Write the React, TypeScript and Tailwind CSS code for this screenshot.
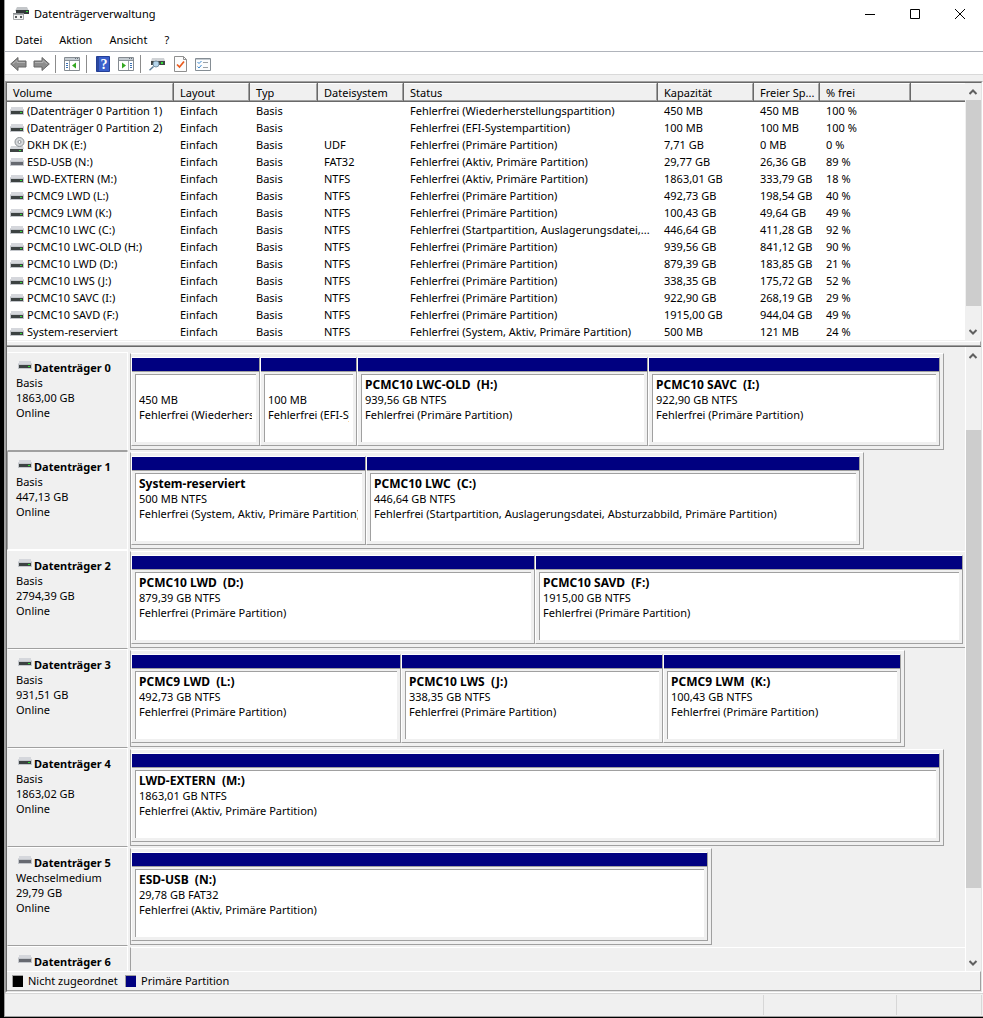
import { ReactNode } from "react"

type DriveKind = "disk" | "removable" | "optical"

interface Volume {
    name: string
    fs: string
    status: string
    capacity: string
    free: string
    percent: string
    kind?: DriveKind
}

interface Partition {
    name?: string
    size: string
    status: string
    weight: number
}

interface Disk {
    id: number
    type?: string
    size?: string
    span: number
    kind?: DriveKind
    selected?: boolean
    partitions: Partition[]
}

const volumes: Volume[] = [
    { name: "(Datenträger 0 Partition 1)", fs: "", status: "Fehlerfrei (Wiederherstellungspartition)", capacity: "450 MB", free: "450 MB", percent: "100 %" },
    { name: "(Datenträger 0 Partition 2)", fs: "", status: "Fehlerfrei (EFI-Systempartition)", capacity: "100 MB", free: "100 MB", percent: "100 %" },
    { name: "DKH DK (E:)", fs: "UDF", status: "Fehlerfrei (Primäre Partition)", capacity: "7,71 GB", free: "0 MB", percent: "0 %", kind: "optical" },
    { name: "ESD-USB (N:)", fs: "FAT32", status: "Fehlerfrei (Aktiv, Primäre Partition)", capacity: "29,77 GB", free: "26,36 GB", percent: "89 %", kind: "removable" },
    { name: "LWD-EXTERN (M:)", fs: "NTFS", status: "Fehlerfrei (Aktiv, Primäre Partition)", capacity: "1863,01 GB", free: "333,79 GB", percent: "18 %" },
    { name: "PCMC9 LWD (L:)", fs: "NTFS", status: "Fehlerfrei (Primäre Partition)", capacity: "492,73 GB", free: "198,54 GB", percent: "40 %" },
    { name: "PCMC9 LWM (K:)", fs: "NTFS", status: "Fehlerfrei (Primäre Partition)", capacity: "100,43 GB", free: "49,64 GB", percent: "49 %" },
    { name: "PCMC10 LWC (C:)", fs: "NTFS", status: "Fehlerfrei (Startpartition, Auslagerungsdatei,...", capacity: "446,64 GB", free: "411,28 GB", percent: "92 %" },
    { name: "PCMC10 LWC-OLD (H:)", fs: "NTFS", status: "Fehlerfrei (Primäre Partition)", capacity: "939,56 GB", free: "841,12 GB", percent: "90 %" },
    { name: "PCMC10 LWD (D:)", fs: "NTFS", status: "Fehlerfrei (Primäre Partition)", capacity: "879,39 GB", free: "183,85 GB", percent: "21 %" },
    { name: "PCMC10 LWS (J:)", fs: "NTFS", status: "Fehlerfrei (Primäre Partition)", capacity: "338,35 GB", free: "175,72 GB", percent: "52 %" },
    { name: "PCMC10 SAVC (I:)", fs: "NTFS", status: "Fehlerfrei (Primäre Partition)", capacity: "922,90 GB", free: "268,19 GB", percent: "29 %" },
    { name: "PCMC10 SAVD (F:)", fs: "NTFS", status: "Fehlerfrei (Primäre Partition)", capacity: "1915,00 GB", free: "944,04 GB", percent: "49 %" },
    { name: "System-reserviert", fs: "NTFS", status: "Fehlerfrei (System, Aktiv, Primäre Partition)", capacity: "500 MB", free: "121 MB", percent: "24 %" },
]

const primary = "Fehlerfrei (Primäre Partition)"

const disks: Disk[] = [
    {
        id: 0, type: "Basis", size: "1863,00 GB", span: 814,
        partitions: [
            { size: "450 MB", status: "Fehlerfrei (Wiederherstellungspartition)", weight: 129 },
            { size: "100 MB", status: "Fehlerfrei (EFI-Systempartition)", weight: 97 },
            { name: "PCMC10 LWC-OLD  (H:)", size: "939,56 GB NTFS", status: primary, weight: 291 },
            { name: "PCMC10 SAVC  (I:)", size: "922,90 GB NTFS", status: primary, weight: 292 },
        ],
    },
    {
        id: 1, type: "Basis", size: "447,13 GB", span: 734, selected: true,
        partitions: [
            { name: "System-reserviert", size: "500 MB NTFS", status: "Fehlerfrei (System, Aktiv, Primäre Partition)", weight: 235 },
            { name: "PCMC10 LWC  (C:)", size: "446,64 GB NTFS", status: "Fehlerfrei (Startpartition, Auslagerungsdatei, Absturzabbild, Primäre Partition)", weight: 494 },
        ],
    },
    {
        id: 2, type: "Basis", size: "2794,39 GB", span: 837,
        partitions: [
            { name: "PCMC10 LWD  (D:)", size: "879,39 GB NTFS", status: primary, weight: 404 },
            { name: "PCMC10 SAVD  (F:)", size: "1915,00 GB NTFS", status: primary, weight: 428 },
        ],
    },
    {
        id: 3, type: "Basis", size: "931,51 GB", span: 775,
        partitions: [
            { name: "PCMC9 LWD  (L:)", size: "492,73 GB NTFS", status: primary, weight: 270 },
            { name: "PCMC10 LWS  (J:)", size: "338,35 GB NTFS", status: primary, weight: 262 },
            { name: "PCMC9 LWM  (K:)", size: "100,43 GB NTFS", status: primary, weight: 238 },
        ],
    },
    {
        id: 4, type: "Basis", size: "1863,02 GB", span: 814,
        partitions: [{ name: "LWD-EXTERN  (M:)", size: "1863,01 GB NTFS", status: "Fehlerfrei (Aktiv, Primäre Partition)", weight: 809 }],
    },
    {
        id: 5, type: "Wechselmedium", size: "29,79 GB", span: 582, kind: "removable",
        partitions: [{ name: "ESD-USB  (N:)", size: "29,78 GB FAT32", status: "Fehlerfrei (Aktiv, Primäre Partition)", weight: 577 }],
    },
    { id: 6, span: 900, kind: "removable", partitions: [] },
]

// width of the disk map that the spans above refer to
const MAP_SPAN = 835

const columns = [
    { label: "Volume", width: "w-[167px]" },
    { label: "Layout", width: "w-[76px]" },
    { label: "Typ", width: "w-[68px]" },
    { label: "Dateisystem", width: "w-[86px]" },
    { label: "Status", width: "w-[254px]" },
    { label: "Kapazität", width: "w-24" },
    { label: "Freier Sp...", width: "w-[66px]" },
    { label: "% frei", width: "w-[91px]" },
]

function DriveIcon({ kind = "disk" }: { kind?: DriveKind }) {
    if (kind === "optical") {
        return (
            <svg width="15" height="16" viewBox="0 0 15 16" className="-mr-px shrink-0">
                <path d="M1 9h12l1 3H0z" fill="#d3d6da" />
                <path d="M0 12h13v3H0z" fill="#3f4444" />
                <circle cx="9.500" cy="5" r="4.500" fill="#d6d9dc" stroke="#8d9296" />
                <circle cx="9.500" cy="5" r="1.500" fill="#fff" stroke="#8d9296" />
                <path d="M9 13h2v1H9z" fill="#35e03a" />
            </svg>
        )
    }
    return (
        <svg width="14" height="8" viewBox="0 0 14 8" className="shrink-0" shapeRendering="crispEdges">
            <path d="M1 0h12v2h1v2H0V2h1z" fill="#d5d7dc" />
            <path d="M0 3h14v5H0z" fill="#c3c6cb" />
            <path d="M1 4h12v3H1z" fill={kind === "removable" ? "#666970" : "#3c4242"} />
            {kind === "disk" && <path d="M10 5h2v1h-2z" fill="#2fe035" />}
        </svg>
    )
}

function AppIcon() {
    return (
        <svg width="16" height="16" viewBox="0 0 16 16">
            <path d="M4 1h10l2 4H2z" fill="#c3c6c9" />
            <path d="M3 4h13v4H3z" fill="#34393a" />
            <path d="M13 5h2v1h-2z" fill="#35e03a" />
            <path d="M0 7h11v2H0z" fill="#8b8f92" />
            <path d="M.5 8.500h10v5H.5z" fill="#f4f4f4" stroke="#a6a9ab" />
            <path d="M2 10h2v2H2zM7 10h2v2H7z" fill="#55595b" />
        </svg>
    )
}

function ArrowIcon({ back }: { back?: boolean }) {
    return (
        <svg width="17" height="16" viewBox="0 0 17 16">
            <path
                d={back ? "M.7 8 8 1.500V5h8v6H8v3.500z" : "M16.300 8 9 1.500V5H1v6h8v3.500z"}
                fill="#8d8d8d"
                stroke="#676767"
            />
            <path d={back ? "M3 8l4-3.500V6.500h8" : "M2 6.500h8V4.500L14 8"} fill="none" stroke="#b2b2b2" />
        </svg>
    )
}

function PaneIcon({ flipped }: { flipped?: boolean }) {
    return (
        <svg width="16" height="14" viewBox="0 0 16 14">
            <path d="M.5.5h15v13H.5z" fill="#fff" stroke="#858b91" />
            <path d="M1 1h14v2H1z" fill="#c4cbd1" />
            <path d="M1 3h14v1H1z" fill="#8a9299" />
            <path d="M11 1h1v1h-1zM13 1h1v1h-1z" fill="#64707a" />
            <path d={flipped ? "M10 4h1v9h-1z" : "M5 4h1v9H5z"} fill="#9aa1a7" />
            <path d={flipped ? "M12 6.500h2M12 8.500h2M12 10.500h2" : "M2 6.500h2M2 8.500h2M2 10.500h2"} stroke="#3c72b4" />
            <path d={flipped ? "M4 5.500v6L8 8.500z" : "M12 5.500v6L8 8.500z"} fill="#35a822" />
        </svg>
    )
}

function HelpIcon() {
    return (
        <svg width="14" height="16" viewBox="0 0 14 16">
            <path d="M.5.5h13v15H.5z" fill="#3a5fcb" stroke="#243f96" />
            <path d="M1 1h2v14H1z" fill="#2a489f" />
            <text x="8" y="13" textAnchor="middle" fontSize="14" fontFamily="Liberation Serif, serif" fontWeight="bold" fill="#fff">?</text>
        </svg>
    )
}

function RescanIcon() {
    return (
        <svg width="16" height="13" viewBox="0 0 16 13">
            <path d="M3 0h12l1 3H2z" fill="#d0d3d6" />
            <path d="M2 3h14v4H2z" fill="#3f4545" />
            <path d="M12 4h2v2h-2z" fill="#35e03a" />
            <circle cx="7" cy="6" r="3" fill="#b6d6ec" stroke="#7893a5" />
            <path d="M4.500 8.500.5 12.300" stroke="#5d7f9a" strokeWidth="1.500" />
        </svg>
    )
}

function CheckPageIcon() {
    return (
        <svg width="13" height="16" viewBox="0 0 13 16">
            <path d="M.5.500h9l3 3v12H.5z" fill="#fcfcfc" stroke="#8f8f8f" />
            <path d="M9.500.5v3h3" fill="none" stroke="#8f8f8f" />
            <path d="M3 8.500 5.500 11 10 5.500" fill="none" stroke="#ea5a1c" strokeWidth="1.700" />
        </svg>
    )
}

function ListIcon() {
    return (
        <svg width="16" height="13" viewBox="0 0 16 13">
            <path d="M.5.500h15v12H.5z" fill="#fbfcfd" stroke="#858d94" />
            <path d="M1 1h14v1H1z" fill="#c4cbd1" />
            <path d="M2.500 4 4 5.500 6.500 3M2.500 8.500 4 10l2.500-3" fill="none" stroke="#3e8ad0" />
            <path d="M8 4.500h5M8 9.500h5" stroke="#9ba1a6" />
        </svg>
    )
}

function ToolButton({ label, className, children }: { label: string; className: string; children: ReactNode }) {
    return (
        <button type="button" aria-label={label} className={`flex h-4 items-center justify-center ${className}`}>
            {children}
        </button>
    )
}

function TitleBar() {
    return (
        <header className="flex h-7 shrink-0 items-center pl-2">
            <AppIcon />
            <h1 className="ml-[5px] flex-1">Datenträgerverwaltung</h1>
            <button type="button" aria-label="Minimieren" className="flex h-[26px] w-[45px] items-center justify-center">
                <svg width="11" height="11" viewBox="0 0 11 11"><path d="M0 5h10v1H0z" /></svg>
            </button>
            <button type="button" aria-label="Maximieren" className="flex h-[26px] w-[45px] items-center justify-center">
                <svg width="11" height="11" viewBox="0 0 11 11"><path d="M.5.500h9v9h-9z" fill="none" stroke="#000" /></svg>
            </button>
            <button type="button" aria-label="Schließen" className="flex h-[26px] w-[45px] items-center justify-center">
                <svg width="11" height="11" viewBox="0 0 11 11"><path d="M0 0l10 10M10 0 0 10" stroke="#000" /></svg>
            </button>
        </header>
    )
}

function Toolbar() {
    return (
        <div className="flex h-[23px] shrink-0 items-center border-b border-[#d9d9d9] pt-0.5 pl-[5px]">
            <ToolButton label="Zurück" className="w-[17px]"><ArrowIcon back /></ToolButton>
            <ToolButton label="Vorwärts" className="ml-1.5 w-[17px]"><ArrowIcon /></ToolButton>
            <div className="ml-[5px] h-[18px] w-px bg-[#8c8c8c]" />
            <ToolButton label="Konsolenstruktur" className="ml-2 w-4"><PaneIcon /></ToolButton>
            <div className="ml-1.5 h-[18px] w-px bg-[#8c8c8c]" />
            <ToolButton label="Hilfe" className="ml-[9px] w-3.5"><HelpIcon /></ToolButton>
            <ToolButton label="Aktionsbereich" className="ml-2 w-4"><PaneIcon flipped /></ToolButton>
            <div className="ml-1.5 h-[18px] w-px bg-[#8c8c8c]" />
            <ToolButton label="Datenträger neu einlesen" className="ml-2 w-4"><RescanIcon /></ToolButton>
            <ToolButton label="Eigenschaften" className="ml-2 w-3.5"><CheckPageIcon /></ToolButton>
            <ToolButton label="Ansicht" className="ml-2 w-4"><ListIcon /></ToolButton>
        </div>
    )
}

function ScrollButton({ down }: { down?: boolean }) {
    return (
        <button type="button" aria-label={down ? "Nach unten" : "Nach oben"} className="flex h-[17px] w-full shrink-0 items-center justify-center">
            <svg width="9" height="6" viewBox="0 0 9 6">
                <path d={down ? "M.5 1 4 4.500 7.500 1" : "M.5 5 4 1.500 7.500 5"} fill="none" stroke="#606060" strokeWidth="2" />
            </svg>
        </button>
    )
}

function VolumeList() {
    return (
        <section className="flex shrink-0 bg-white">
            <table className="min-w-0 flex-1 table-fixed border-collapse">
                <thead>
                    <tr className="h-[19px]">
                        {columns.map((col) => (
                            <th key={col.label} scope="col" className={`${col.width} p-0 text-left font-normal`}>
                                <div className="h-[19px] border-r border-b border-[#696969]">
                                    <div className="h-[18px] truncate border-t border-r border-b border-t-white border-r-[#a0a0a0] border-b-[#a0a0a0] bg-[#f0f0f0] pt-px pl-1.5 leading-4">
                                        {col.label}
                                    </div>
                                </div>
                            </th>
                        ))}
                        <td className="p-0">
                            <div className="h-[19px] border-b border-[#696969]">
                                <div className="h-[18px] border-t border-b border-t-white border-b-[#a0a0a0] bg-[#f0f0f0]" />
                            </div>
                        </td>
                    </tr>
                </thead>
                <tbody>
                    {volumes.map((v) => (
                        <tr key={v.name} className="h-[17px] leading-[17px] whitespace-nowrap">
                            <td className="p-0">
                                <div className="flex h-[17px] items-center gap-[3px] pl-[3px]">
                                    <DriveIcon kind={v.kind} />
                                    {v.name}
                                </div>
                            </td>
                            <td className="py-0 pl-1.5">Einfach</td>
                            <td className="py-0 pl-1.5">Basis</td>
                            <td className="py-0 pl-1.5">{v.fs}</td>
                            <td className="py-0 pl-1.5">{v.status}</td>
                            <td className="py-0 pl-1.5">{v.capacity}</td>
                            <td className="py-0 pl-1.5">{v.free}</td>
                            <td className="py-0 pl-1.5">{v.percent}</td>
                            <td className="p-0" />
                        </tr>
                    ))}
                </tbody>
            </table>
            <div className="flex w-4 shrink-0 flex-col bg-[#f0f0f0] pl-px">
                <ScrollButton />
                <div className="flex-1 bg-[#cdcdcd]" />
                <div className="h-[17px]" />
                <ScrollButton down />
            </div>
        </section>
    )
}

function PartitionBox({ partition, total }: { partition: Partition; total: number }) {
    return (
        <div
            className="flex min-w-0 flex-col border-t border-r border-b border-l border-t-white border-r-[#a0a0a0] border-b-[#a0a0a0] border-l-white"
            style={{ width: `${(partition.weight / total) * 100}%` }}
        >
            <div className="h-3.5 border-b border-[#a0a0a0] bg-[#000080]" />
            <div className="mr-[3px] mb-[3px] ml-[3px] mt-0.5 h-17 overflow-hidden border-t border-l border-[#a0a0a0] bg-white pt-0.5 pr-1 pl-[3px] leading-[15px] whitespace-pre">
                <p className="h-[15px] overflow-hidden text-[12px] font-bold">{partition.name}</p>
                <p className="overflow-hidden">{partition.size}</p>
                <p className="overflow-hidden">{partition.status}</p>
            </div>
        </div>
    )
}

function DiskRow({ disk }: { disk: Disk }) {
    const total = disk.partitions.reduce((sum, p) => sum + p.weight, 0)
    const edge = disk.selected
        ? "border-t-[#a0a0a0] border-l-[#a0a0a0] border-r-white border-b-white"
        : "border-t-white border-l-[#f0f0f0] border-r-white border-b-[#a0a0a0]"
    return (
        <li className="flex h-[99px] shrink-0">
            <div className={`mr-0.5 w-[121px] shrink-0 border pt-[7px] pl-2 leading-[15px] ${edge}`}>
                <div className="flex pl-0.5">
                    <div className="pt-px"><DriveIcon kind={disk.kind} /></div>
                    <h2 className="ml-0.5 font-bold whitespace-nowrap">Datenträger {disk.id}</h2>
                </div>
                {disk.type && (
                    <>
                        <p>{disk.type}</p>
                        <p>{disk.size}</p>
                        <p>Online</p>
                    </>
                )}
            </div>
            <div className="min-w-0 flex-1 overflow-hidden">
                <div
                    className="my-px flex h-[97px] border border-t-white border-r-[#a0a0a0] border-b-[#a0a0a0] border-l-[#a0a0a0] py-[3px] pr-[3px]"
                    style={{ width: `${(disk.span / MAP_SPAN) * 100}%` }}
                >
                    {disk.partitions.map((p) => (
                        <PartitionBox key={p.status + p.size} partition={p} total={total} />
                    ))}
                </div>
            </div>
        </li>
    )
}

function DiskMap() {
    return (
        <section className="flex min-h-0 flex-1">
            <ul className="flex min-w-0 flex-1 flex-col overflow-hidden pt-[5px]">
                {disks.map((d) => (
                    <DiskRow key={d.id} disk={d} />
                ))}
            </ul>
            <div className="flex w-4 shrink-0 flex-col border-l border-white">
                <ScrollButton />
                <div className="flex-[66]" />
                <div className="flex-[459] bg-[#cdcdcd]" />
                <div className="flex-[66]" />
                <ScrollButton down />
            </div>
        </section>
    )
}

function Legend() {
    return (
        <div className="flex h-5 shrink-0 items-center border-t border-r border-b border-t-white border-r-[#a0a0a0] border-b-[#a0a0a0] pl-[5px]">
            <span className="h-3 w-[11px] border-t border-l border-[#a0a0a0] bg-black" />
            <span className="ml-[5px] w-[92px]">Nicht zugeordnet</span>
            <span className="ml-[5px] h-3 w-[11px] border-t border-l border-[#a0a0a0] bg-[#000080]" />
            <span className="ml-[5px]">Primäre Partition</span>
        </div>
    )
}

export default function App() {
    return (
        <div className="flex h-screen bg-black pl-1 font-['Noto_Sans',sans-serif] text-[11px] text-black">
            <div className="mb-px flex min-w-0 flex-1 flex-col border-b border-l border-[#a0a0a0] bg-white">
                <TitleBar />
                <nav className="flex h-6 shrink-0 items-center gap-[17px] border-b border-[#b0b4bb] pt-0.5 pl-2.5">
                    <button type="button">Datei</button>
                    <button type="button">Aktion</button>
                    <button type="button">Ansicht</button>
                    <button type="button">?</button>
                </nav>
                <Toolbar />
                <div className="flex min-h-0 flex-1 flex-col bg-[#f0f0f0] pt-1.5">
                    <main className="flex min-h-0 flex-1 flex-col border border-t-[#a0a0a0] border-r-white border-b-white border-l-[#a0a0a0]">
                        <div className="flex min-h-0 flex-1 flex-col border border-t-[#696969] border-r-[#e3e3e3] border-b-[#e3e3e3] border-l-[#696969]">
                            <VolumeList />
                            <div className="flex h-[7px] shrink-0 flex-col border-b border-[#696969] pt-px">
                                <div className="flex-1 border-t border-r border-b border-t-white border-r-[#a0a0a0] border-b-[#a0a0a0]" />
                            </div>
                            <DiskMap />
                            <Legend />
                        </div>
                    </main>
                    <footer className="flex h-[23px] shrink-0 border-t border-[#d7d7d7] py-px">
                        <div className="flex-1 border-r border-[#d7d7d7]" />
                        <div className="w-[133px] border-r border-[#d7d7d7]" />
                        <div className="mr-px w-[85px] border-r border-[#d7d7d7]" />
                    </footer>
                </div>
            </div>
        </div>
    )
}
